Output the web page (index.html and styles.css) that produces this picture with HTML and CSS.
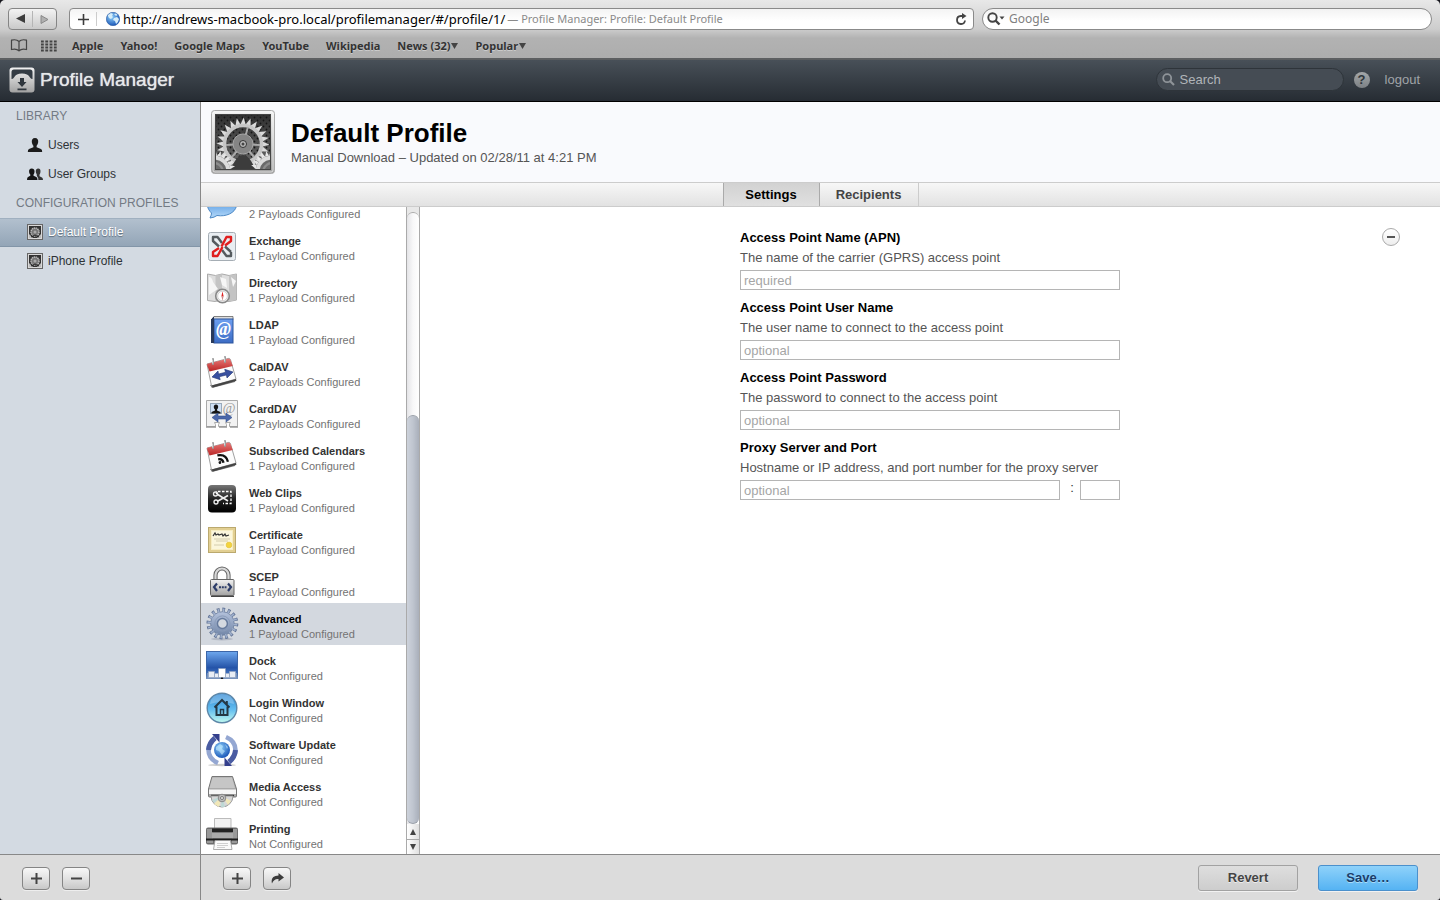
FILE: index.html
```html
<!DOCTYPE html>
<html lang="en">
<head>
<meta charset="utf-8">
<title>Profile Manager: Profile: Default Profile</title>
<link rel="stylesheet" href="styles.css">
</head>
<body>
<svg class="defs" aria-hidden="true">
  <defs>
    <linearGradient id="metal" x1="0" y1="0" x2="0" y2="1"><stop offset="0" stop-color="#f2f2f2"/><stop offset="1" stop-color="#a2a2a2"/></linearGradient>
    <linearGradient id="dark" x1="0" y1="0" x2="0" y2="1"><stop offset="0" stop-color="#303030"/><stop offset="1" stop-color="#6c6c6c"/></linearGradient>
    <linearGradient id="red" x1="0" y1="0" x2="0" y2="1"><stop offset="0" stop-color="#e87a78"/><stop offset="1" stop-color="#b92525"/></linearGradient>
    <linearGradient id="blue" x1="0" y1="0" x2="0" y2="1"><stop offset="0" stop-color="#2f67b8"/><stop offset=".55" stop-color="#6fabe8"/><stop offset="1" stop-color="#b5d9f9"/></linearGradient>
    <linearGradient id="sky" x1="0" y1="0" x2="0" y2="1"><stop offset="0" stop-color="#6ea8ee"/><stop offset=".6" stop-color="#2453a8"/><stop offset="1" stop-color="#5689d0"/></linearGradient>
    <linearGradient id="book" x1="0" y1="0" x2="0" y2="1"><stop offset="0" stop-color="#6d9ff0"/><stop offset="1" stop-color="#3c6cc4"/></linearGradient>
    <linearGradient id="aqua" x1="0" y1="0" x2="0" y2="1"><stop offset="0" stop-color="#2f86d2"/><stop offset=".55" stop-color="#62bdf0"/><stop offset="1" stop-color="#c2fbf0"/></linearGradient>
    <linearGradient id="black" x1="0" y1="0" x2="0" y2="1"><stop offset="0" stop-color="#777"/><stop offset=".5" stop-color="#222"/><stop offset="1" stop-color="#000"/></linearGradient>
    <linearGradient id="steel" x1="0" y1="0" x2="0" y2="1"><stop offset="0" stop-color="#b4c2dc"/><stop offset="1" stop-color="#7387a8"/></linearGradient>
    <radialGradient id="globe" cx=".4" cy=".35" r=".7"><stop offset="0" stop-color="#8fd0fa"/><stop offset="1" stop-color="#1450b4"/></radialGradient>
    <clipPath id="plateClip"><rect x="5" y="5" width="54" height="54"/></clipPath>
    <pattern id="mesh" width="6" height="6" patternUnits="userSpaceOnUse"><circle cx="1.5" cy="1.5" r=".9" fill="#161616"/><circle cx="4.5" cy="4.5" r=".9" fill="#161616"/></pattern>
    <path id="tooth" d="M-2.6-19.5L.7-26.500 2.600-19.500z"/>
    <g id="teeth6"><use href="#tooth"/><use href="#tooth" transform="rotate(15)"/><use href="#tooth" transform="rotate(30)"/><use href="#tooth" transform="rotate(45)"/><use href="#tooth" transform="rotate(60)"/><use href="#tooth" transform="rotate(75)"/></g>
    <g id="teeth"><use href="#teeth6"/><use href="#teeth6" transform="rotate(90)"/><use href="#teeth6" transform="rotate(180)"/><use href="#teeth6" transform="rotate(270)"/></g>
    <symbol id="gears" viewBox="0 0 64 64">
      <rect x=".5" y=".5" width="63" height="63" rx="3" fill="url(#metal)" stroke="#aaa"/>
      <rect x="2" y="2" width="60" height="60" rx="2" fill="none" stroke="#fff" stroke-opacity=".6"/>
      <rect x="4.500" y="4.500" width="55" height="55" fill="url(#dark)" stroke="#444"/>
      <rect x="5" y="5" width="54" height="54" fill="url(#mesh)"/>
      <g clip-path="url(#plateClip)">
        <g transform="translate(32 34)">
          <g fill="#dadada"><use href="#teeth"/></g>
          <circle r="18.500" fill="none" stroke="#c6c6c6" stroke-width="3.500"/>
          <path d="M0 0L5-17M0 0L17 1M0 0L-17 1M0 0L-11 13M0 0L11 13" fill="none" stroke="#a8a8a8" stroke-width="2"/>
          <circle r="10" fill="#858585" stroke="#a5a5a5"/><circle r="3.500" fill="#bbb" stroke="#333"/><circle r="1.500" fill="#444"/>
        </g>
        <path d="M20 60C23 50 28 45 32 45S41 50 44 60z" fill="#3c3c3c"/>
        <g transform="translate(4 61) scale(.78)"><g fill="#e6e6e6"><use href="#teeth"/></g><circle r="17" fill="#6a6a6a" stroke="#dcdcdc" stroke-width="5"/><path d="M-5-10A12 12 0 0 1 10 0" fill="none" stroke="#8c8c8c" stroke-width="3"/></g>
        <g transform="translate(60 61) scale(.78)"><g fill="#e6e6e6"><use href="#teeth"/></g><circle r="17" fill="#6a6a6a" stroke="#dcdcdc" stroke-width="5"/><path d="M-10 0A12 12 0 0 1 5-10" fill="none" stroke="#8c8c8c" stroke-width="3"/></g>
      </g>
    </symbol>
    <symbol id="gears-small" viewBox="0 0 16 16">
      <rect x=".5" y=".5" width="15" height="15" fill="#d8d8d8" stroke="#666"/>
      <rect x="2" y="2" width="12" height="12" fill="#333"/>
      <circle cx="8" cy="8" r="4" fill="#777" stroke="#bbb" stroke-width="1.500" stroke-dasharray="1.3 .6"/>
      <circle cx="8" cy="8" r="1.500" fill="#aaa"/>
      <path d="M2 10l4 4H2zM14 10l-4 4h4z" fill="#bbb"/><path d="M4 13l4-2 4 2" stroke="#222" fill="none"/>
    </symbol>
    <symbol id="calendar" viewBox="0 0 36 36">
      <g transform="translate(0 1)">
      <path d="M6 30l2 3 23-6 1-3z" fill="#777"/>
      <path d="M3 9l21-5.500c1.500-.3 2 0 2.500 1.200L32 24 7.500 31z" fill="#fcfcfc" stroke="#888" stroke-width=".8"/>
      <path d="M3.500 8.800L24.500 3.500q1.500 0 2 1.500l2.300 6L5.500 16.500 3 10z" fill="url(#red)"/>
      <path d="M7.500 30.500L32 24l.4 1.700L9 32.500z" fill="#444"/>
      <path d="M9 4v5M21 2v5" stroke="#999" stroke-width="2" stroke-linecap="round"/><path d="M8.600 4.500v4M20.600 2.500v4" stroke="#eee" stroke-width=".8"/>
      </g>
    </symbol>
  </defs>
</svg>

<div class="window">
  <header class="browser">
    <div class="toolbar">
      <div class="history">
        <button aria-label="Back"><svg width="10" height="10"><path d="M9 0v9L0 4.500z" fill="#3d3d3d"/></svg></button>
        <button aria-label="Forward"><svg width="9" height="9"><path d="M1 .5v8l7-4z" fill="#b0b0b0" stroke="#888"/></svg></button>
      </div>
      <div class="address">
        <button class="add" aria-label="Add bookmark"><svg width="11" height="11"><path d="M5.500 0v11M0 5.500h11" stroke="#3c3c3c" stroke-width="1.600"/></svg></button>
        <svg class="favicon" width="14" height="14" viewBox="0 0 14 14"><circle cx="7" cy="7" r="6.700" fill="url(#globe)" stroke="#2b5b9f" stroke-width=".6"/><path d="M2 3l3-2 2 1-1 2 1 1-2 2-2-1-1-2zM8 6l3-1 2 2-1 3-2 2-1-3-2-1zM8 2l2-.5 1.500 1.500L10 4z" fill="#d5ecf8"/></svg>
        <span class="url">http://andrews-macbook-pro.local/profilemanager/#/profile/1/</span>
        <span class="page-title">— Profile Manager: Profile: Default Profile</span>
        <button class="reload" aria-label="Reload"><svg width="12" height="13" viewBox="0 0 12 13"><path d="M8.500 3H5.800A4 4 0 1 0 10 7.500" fill="none" stroke="#444" stroke-width="1.800"/><path d="M7 0l4.500 3L7 6z" fill="#444"/></svg></button>
      </div>
      <label class="google">
        <svg width="18" height="14" viewBox="0 0 18 14"><circle cx="5.500" cy="5.500" r="4.200" fill="none" stroke="#444" stroke-width="1.900"/><path d="M8.500 8.500l4 4" stroke="#444" stroke-width="2.400"/><path d="M12.500 4.500h5L15 7.500z" fill="#444"/></svg>
        <input type="search" placeholder="Google" aria-label="Google">
      </label>
    </div>
    <nav class="bookmarks">
      <button aria-label="Bookmarks"><svg width="18" height="13" viewBox="0 0 18 13"><path d="M9 2.500C7 .5 4 .5 1.500 1.200v9.300C4 9.800 7 9.800 9 11.800c2-2 5-2 7.500-1.300V1.200C14 .5 11 .5 9 2.500zV12" fill="none" stroke="#444" stroke-width="1.200"/></svg></button>
      <button aria-label="Top Sites"><svg class="grid" width="16" height="12" viewBox="0 0 16 12"><path d="M0 1.500h16M0 4.500h16M0 7.500h16M0 10.500h16" stroke="#444" stroke-width="2" stroke-dasharray="2.800 1.500"/></svg></button>
      <a href="#">Apple</a><a href="#">Yahoo!</a><a href="#">Google Maps</a><a href="#">YouTube</a><a href="#">Wikipedia</a>
      <a href="#" class="drop">News (32)<svg width="7" height="6"><path d="M0 0h7L3.500 6z" fill="#444"/></svg></a>
      <a href="#" class="drop">Popular<svg width="7" height="6"><path d="M0 0h7L3.500 6z" fill="#444"/></svg></a>
    </nav>
  </header>

  <header class="app-bar">
    <svg width="26" height="26" viewBox="0 0 26 26"><rect x=".5" y=".5" width="25" height="25" rx="3" fill="url(#metal)"/><path d="M2.500 12V5q0-2.500 2.500-2.500h16q2.500 0 2.500 2.500v7q-1.500 0-2.500-1.500-2-4-8-4t-8 4Q4 12 2.500 12z" fill="#343c44"/><path d="M11 11h4v4h2.500L13 20l-4.500-5H11zM8.500 21.500h9v1.800h-9z" fill="#30373e"/></svg>
    <h1>Profile Manager</h1>
    <label class="app-search">
      <svg width="13" height="13" viewBox="0 0 13 13"><circle cx="5.200" cy="5.200" r="4" fill="none" stroke="#8f9499" stroke-width="1.800"/><path d="M8 8l4 4" stroke="#8f9499" stroke-width="2.200"/></svg>
      <input type="search" placeholder="Search" aria-label="Search">
    </label>
    <button class="help" aria-label="Help">?</button>
    <a class="logout" href="#">logout</a>
  </header>

  <main class="app">
    <aside class="sidebar">
      <h2>LIBRARY</h2>
      <a href="#"><svg width="16" height="16" viewBox="0 0 16 16"><path d="M8 1C5.500 1 4.600 2.800 4.800 5c.2 2 1 3 1.600 3.800v1.400L2 12q-1.200.7-1.200 3h14.400q0-2.300-1.200-3L9.600 10.200V8.800C10.200 8 11 7 11.200 5 11.400 2.800 10.500 1 8 1z" fill="#1c1c1c"/></svg>Users</a>
      <a href="#"><svg width="16" height="16" viewBox="0 0 16 16"><path d="M11.300 2.500c-2 0-2.700 1.500-2.500 3.300.1 1.300.6 2 1 2.600v1.400l1.500 2.700V14H16q0-2-1-2.600l-2.500-1.200V8.800c1.200-1.400 1.900-6.300-1.200-6.300z" fill="#333"/><path d="M4.800 2.500c-2.200 0-2.900 1.500-2.700 3.300.1 1.300.6 2.200 1.200 2.800v1.200L1 11Q0 11.600 0 14h10.500q0-2.400-1.200-3L6.500 9.800V8.600c1.400-1.400 1.900-6.100-1.700-6.100z" fill="#151515"/></svg>User Groups</a>
      <h2>CONFIGURATION PROFILES</h2>
      <a href="#" class="selected"><svg width="16" height="16"><use href="#gears-small"/></svg>Default Profile</a>
      <a href="#"><svg width="16" height="16"><use href="#gears-small"/></svg>iPhone Profile</a>
    </aside>

    <section class="profile">
      <header class="profile-head">
        <svg width="64" height="64"><use href="#gears"/></svg>
        <div><h2>Default Profile</h2><p>Manual Download – Updated on 02/28/11 at 4:21 PM</p></div>
      </header>
      <nav class="tabs"><button class="active">Settings</button><button>Recipients</button></nav>
      <div class="body">
        <div class="payloads">
          <ul>
            <li><svg viewBox="0 0 36 36"><path d="M18 4C8 4 2 12 3.500 20c.5 3 2 5 4 7Q7.500 29 6 32q4.500-.5 7-2.500C22 31 31 27 32.500 20 34 12 28 4 18 4z" fill="url(#blue)" stroke="#4d88c4"/></svg><div class="label"><span></span><small>2 Payloads Configured</small></div></li>
            <li><svg viewBox="0 0 36 36"><rect x="4.500" y="4.500" width="27" height="28" rx="2" fill="#e9eef2" stroke="#a5adb4"/><g fill="none" stroke-width="2.400" stroke-linejoin="round"><path d="M15 18.500L9 13V9h4.500l4.500 6" stroke="#555b5f"/><path d="M27 24v4h-4.500L18 22M21 18.500l6 5.500" stroke="#555b5f"/><path d="M17.500 18.500L22.500 9H27v4l-6 4.500" stroke="#e01f1f"/><path d="M15 20l-6 4v4h4.500l5-9" stroke="#e01f1f"/></g></svg><div class="label"><span>Exchange</span><small>1 Payload Configured</small></div></li>
            <li><svg viewBox="0 0 36 36"><path d="M3.500 4l8 1.500L18 4l7 1.500L32.500 4v26L25 31.500 18 30l-7 1.500-7.500-1z" fill="#dedede" stroke="#aaa"/><path d="M11.500 5.500v26L18 30V4zM25 5.500L32.500 4v26L25 31.500z" fill="#c4c4c4"/><path d="M5 7q3 0 4 5l5 7q-5 3-9 6zM16 7l6 2 1 9-5-3zM27 7l5 4-3 6z" fill="#f6f6f6"/><circle cx="18.500" cy="26" r="6.800" fill="#eee" stroke="#888" stroke-width="1.600"/><circle cx="18.500" cy="26" r="4.800" fill="#fff" stroke="#bbb" stroke-width=".6"/><path d="M18.500 21.500l1.200 5h-2.400z" fill="#d22"/><path d="M18.500 31l-1-4.500h2z" fill="#c88"/></svg><div class="label"><span>Directory</span><small>1 Payload Configured</small></div></li>
            <li><svg viewBox="0 0 36 36"><path d="M10 4.500h19v3H8z" fill="#ddd" stroke="#666" stroke-width=".8"/><path d="M7.500 7L10 4.500v26H7.500z" fill="#1c2c4c"/><rect x="10" y="7" width="19" height="24" fill="url(#book)" stroke="#2d559c"/><path d="M7 7h3v24H7z" fill="#283a5c"/><text x="19.500" y="23" text-anchor="middle" class="at">@</text></svg><div class="label"><span>LDAP</span><small>1 Payload Configured</small></div></li>
            <li><svg viewBox="0 0 36 36"><use href="#calendar"/><path d="M8 23l6-6 .5 3 7-1.700-.8-3L29 18l-6 6-.6-3-7 1.700.8 3z" fill="#3850a0" stroke="#223577" stroke-width=".6"/></svg><div class="label"><span>CalDAV</span><small>2 Payloads Configured</small></div></li>
            <li><svg viewBox="0 0 36 36"><path d="M2.500 4.500h31v26h-8q-.5-3 1-4h-5q1.500 2 1 4h-8q-.5-2 1-4h-5q1.500 2 1 4h-9z" fill="#f2f2f2" stroke="#aaa"/><path d="M2 31h10M15 31h8M26 31h8" stroke="#999" stroke-width="1.500"/><rect x="6.500" y="7.500" width="11" height="10" fill="#cfe0f5" stroke="#9ab"/><path d="M12 8.500c-3 0-2.500 4-1 5v1L7.500 16v1.500h9V16L13 14.500v-1c1.500-1 2-5-1-5z" fill="#151515"/><text x="25" y="17" text-anchor="middle" class="at grey">@</text><path d="M8 21.500l6-4.500v3h8v-3l6 4.500-6 4.500v-3h-8v3z" fill="#4a67aa" stroke="#34508f" stroke-width=".6"/></svg><div class="label"><span>CardDAV</span><small>2 Payloads Configured</small></div></li>
            <li><svg viewBox="0 0 36 36"><use href="#calendar"/><g transform="rotate(-12 18 20)" fill="none" stroke="#111" stroke-width="2.300"><path d="M14 20.500q4.500 0 4.500 4.500M14 16.500q9 0 9 8.500"/><circle cx="15" cy="24" r=".9" fill="#111" stroke-width="1"/></g></svg><div class="label"><span>Subscribed Calendars</span><small>1 Payload Configured</small></div></li>
            <li><svg viewBox="0 0 36 36"><rect x="4" y="5" width="28" height="27.500" rx="4" fill="url(#black)"/><path d="M12.500 14V11.500H27V23.500H19" fill="none" stroke="#fff" stroke-width="1.300" stroke-dasharray="2.500 1.500"/><path d="M13 14l11 7M13 21.500l11-6" stroke="#eee" stroke-width="1.700"/><circle cx="11.500" cy="14" r="2" fill="none" stroke="#eee" stroke-width="1.300"/><circle cx="12" cy="22" r="2" fill="none" stroke="#eee" stroke-width="1.300"/></svg><div class="label"><span>Web Clips</span><small>1 Payload Configured</small></div></li>
            <li><svg viewBox="0 0 36 36"><rect x="4.500" y="5.500" width="27" height="25" fill="#e2cf92" stroke="#bba96e"/><rect x="7.500" y="8.500" width="21" height="19" fill="#fbf6dc" stroke="#f7edc2"/><path d="M9 14l2-3 1 2 2-1 1 1 3-1 1 2 2-2 1 2 3-1" fill="none" stroke="#333" stroke-width="1.200"/><path d="M10 17h16M12 19h12M10 23h10" stroke="#ccc4a2" stroke-width=".8"/><circle cx="25" cy="23" r="2.800" fill="#f4d43c" stroke="#e9cb4c"/></svg><div class="label"><span>Certificate</span><small>1 Payload Configured</small></div></li>
            <li><svg viewBox="0 0 36 36"><path d="M11.500 17v-6a6.500 6.500 0 0 1 13 0v6" fill="none" stroke="#666" stroke-width="4.200"/><path d="M11.500 17v-6a6.500 6.500 0 0 1 13 0v6" fill="none" stroke="#d8d8d8" stroke-width="2.200"/><rect x="6.500" y="15.500" width="23.500" height="16" rx="1" fill="url(#metal)" stroke="#666"/><path d="M7 32.500h23" stroke="#444"/><path d="M13 19.500L10 23l3 4M24 19.500l3 3.500-3 4" fill="none" stroke="#2c3c68" stroke-width="2.200"/><path d="M15 23.200h7.500" stroke="#2c3c68" stroke-width="2" stroke-dasharray="2 .8"/></svg><div class="label"><span>SCEP</span><small>1 Payload Configured</small></div></li>
            <li class="selected"><svg viewBox="0 0 36 36"><ellipse cx="18" cy="33" rx="11" ry="1.500" fill="#b4bac6"/><g transform="translate(18.400 17.500)"><circle r="13.700" fill="none" stroke="#5d6f92" stroke-width="4.400" pathLength="64" stroke-dasharray="2 2"/><circle r="11.800" fill="url(#steel)" stroke="#6a7c9c" stroke-width=".8"/><circle r="13" fill="none" stroke="#9fb0cd" stroke-width="4" pathLength="64" stroke-dasharray="1.200 2.800" stroke-dashoffset="-.4"/><circle r="7.600" fill="none" stroke="#8a9cba"/><circle r="5" fill="#d4d9e0" stroke="#667a9c" stroke-width="1.500"/></g></svg><div class="label"><span>Advanced</span><small>1 Payload Configured</small></div></li>
            <li><svg viewBox="0 0 36 36"><rect x="2.500" y="3.500" width="31" height="27" fill="url(#sky)" stroke="#3c66a8"/><path d="M3 25h30l1 6H2z" fill="#7792bc"/><path d="M4.500 23.500h6v6h-6zM10.500 25.500h4v4h-4zM25.500 23.500h6v6h-6zM21.500 25.500h4v4h-4z" fill="#e8edf5" stroke="#91a3c3" stroke-width=".7"/><path d="M14.500 20.500h7v9h-7z" fill="#fff" stroke="#8497b7" stroke-width=".6"/><path d="M16.500 31l1.500-2 1.500 2z" fill="#111"/></svg><div class="label"><span>Dock</span><small>Not Configured</small></div></li>
            <li><svg viewBox="0 0 36 36"><circle cx="18" cy="18" r="14.800" fill="url(#aqua)" stroke="#5e87a8" stroke-width="1.400"/><path d="M6 14q1-10 12-10t12 10q-12-4-24 0z" fill="#fff" opacity=".25"/><path d="M10.500 17.500L18 10l7.500 7.500M12.500 16.500V25h11v-8.500M22.800 14v-3" fill="none" stroke="#243845" stroke-width="2"/><path d="M16.500 25v-5.500h3V25" fill="none" stroke="#243845" stroke-width="1.500"/></svg><div class="label"><span>Login Window</span><small>Not Configured</small></div></li>
            <li><svg viewBox="0 0 36 36"><ellipse cx="18" cy="33" rx="14" ry="1.200" fill="#ccc"/><path d="M14 31Q4.500 27 4.500 18 5 11 11 6" fill="none" stroke="#94a7d2" stroke-width="4.500"/><path d="M4.500 18Q5 11 11 6" fill="none" stroke="#4a5ca2" stroke-width="5"/><path d="M8 2h7.500v8.500z" fill="#343f8c"/><path d="M22 5q9.500 4 9.500 13-.5 7-6.500 12" fill="none" stroke="#94a7d2" stroke-width="4.500"/><path d="M31.500 18q-.5 7-6.500 12" fill="none" stroke="#4a5ca2" stroke-width="5"/><path d="M28 34h-7.500v-8.500z" fill="#343f8c"/><circle cx="18" cy="18" r="8" fill="url(#globe)"/><path d="M12 15l4-3 3 2-1 3 3 2-3 4-3-4-3-1zM21 12l3 3-1 2z" fill="#c8ecff" opacity=".6"/></svg><div class="label"><span>Software Update</span><small>Not Configured</small></div></li>
            <li><svg viewBox="0 0 36 36"><path d="M8 2.500h20.500L32.500 15v7q0 1-1 1h-26q-1 0-1-1v-7z" fill="#aaa" stroke="#777"/><path d="M8.500 3.500h19.500L31 14H5.500z" fill="#c6c6c6"/><path d="M5 15.500h27V20H5z" fill="#f6f6f6"/><path d="M7 21.500h23" stroke="#333" stroke-width="1.500"/><path d="M7 22a11 11 0 0 0 22 0z" fill="#d7d7d7" stroke="#999"/><path d="M18 22L10 30l5 3zM18 22l9 5-3 4z" fill="#f1e8b8"/><path d="M18 22L8 26l2 3zM18 22l3 11-4 0z" fill="#bdd8d5"/><circle cx="18" cy="24" r="3.800" fill="#bbb" stroke="#888"/><circle cx="18" cy="24" r="1.500" fill="#eee" stroke="#777"/></svg><div class="label"><span>Media Access</span><small>Not Configured</small></div></li>
            <li><svg viewBox="0 0 36 36"><path d="M10.500 2.500h16.500v12H10.500z" fill="#f2f2f2" stroke="#bbb"/><rect x="2" y="11.500" width="32" height="17" rx="2" fill="#6d6d6d"/><path d="M3 13h6v14H3zM28 13h5v14h-5z" fill="#999"/><path d="M8 12.500h21v4H8z" fill="#222"/><path d="M8 16.500h21v6H8z" fill="#aaa"/><path d="M2 22.500h32v2H2z" fill="#1c1c1c"/><path d="M11 24.500h15.500l1.500 9H9.500z" fill="#fafafa" stroke="#999" stroke-width=".8"/><path d="M13 27.500h11M13 29.500h11M13 31.500h8" stroke="#bbb" stroke-width=".7"/></svg><div class="label"><span>Printing</span><small>Not Configured</small></div></li>
          </ul>
          <div class="scrollbar">
            <div class="track"><div class="thumb"></div></div>
            <button aria-label="Scroll up"><svg width="6" height="6"><path d="M3 0l3 6H0z" fill="#444"/></svg></button>
            <button aria-label="Scroll down"><svg width="6" height="6"><path d="M0 0h6L3 6z" fill="#444"/></svg></button>
          </div>
        </div>
        <div class="pane">
          <form class="fields">
            <div class="field"><label for="apn">Access Point Name (APN)</label><p>The name of the carrier (GPRS) access point</p><input id="apn" placeholder="required"></div>
            <div class="field"><label for="user">Access Point User Name</label><p>The user name to connect to the access point</p><input id="user" placeholder="optional"></div>
            <div class="field"><label for="pass">Access Point Password</label><p>The password to connect to the access point</p><input id="pass" type="password" placeholder="optional"></div>
            <div class="field"><label for="proxy">Proxy Server and Port</label><p>Hostname or IP address, and port number for the proxy server</p><div class="proxy"><input id="proxy" placeholder="optional"><span>:</span><input class="port" aria-label="Port"></div></div>
          </form>
          <button class="remove" aria-label="Remove payload"></button>
        </div>
      </div>
    </section>
  </main>

  <footer class="bottom">
    <div class="side-actions">
      <button class="tool" aria-label="Add profile"><svg width="11" height="11"><path d="M5.500 0v11M0 5.500h11" stroke="#444" stroke-width="2"/></svg></button>
      <button class="tool" aria-label="Remove profile"><svg width="11" height="11"><path d="M0 5.500h11" stroke="#444" stroke-width="2"/></svg></button>
    </div>
    <div class="main-actions">
      <div class="tools">
        <button class="tool" aria-label="Add payload"><svg width="11" height="11"><path d="M5.500 0v11M0 5.500h11" stroke="#444" stroke-width="2"/></svg></button>
        <button class="tool" aria-label="Share"><svg width="13" height="11" viewBox="0 0 13 11"><path d="M7.500 0L13 4.500l-5.500 4V6Q3 5.500 1 10.500-1 3 7.500 2.500z" fill="#3c3c3c"/></svg></button>
      </div>
      <button class="push">Revert</button>
      <button class="push save">Save…</button>
    </div>
  </footer>
</div>
</body>
</html>
```
FILE: styles.css
```css
* { box-sizing: border-box; }
body { margin: 0; background: #15151c; font: 13px/20px "Liberation Sans", Arial, sans-serif; color: #333; }
h1, h2, p, ul { margin: 0; padding: 0; font-weight: normal; }
button, input { font: inherit; color: inherit; margin: 0; padding: 0; border: 0; background: none; outline: 0; min-width: 0; }
input[type="search"] { appearance: none; }
button { display: flex; align-items: center; justify-content: center; }
a { color: inherit; text-decoration: none; }
svg { display: block; flex: none; }
.defs { position: absolute; width: 0; height: 0; }

.window { display: flex; flex-direction: column; height: 100vh; border-radius: 5px 5px 3px 3px; overflow: hidden; }

/* Browser chrome */
.browser { flex: none; padding: 8px 8px 0; height: 60px; background: linear-gradient(#e8e8e8, #cdcdcd 50%, #b2b2b2 66%, #adadad); border-bottom: 2px solid #5d5f61; font-family: "Noto Sans", sans-serif; }
.toolbar { display: flex; height: 22px; }
.history { flex: none; display: flex; width: 49px; margin-right: 12px; border: 1px solid #858585; border-radius: 4px; background: linear-gradient(#f3f3f3, #c9c9c9); }
.history button { flex: 1; }
.history button + button { border-left: 1px solid #b5b5b5; margin: 2px 0; }
.address { flex: 1; display: flex; align-items: center; margin-right: 8px; padding: 0 6px 0 0; border: 1px solid #8a8a8a; border-radius: 4px; background: linear-gradient(#f4f4f4, #fff 60%); min-width: 0; white-space: nowrap; }
.add { width: 27px; height: 14px; border-right: 1px solid #ccc; margin-right: 9px; }
.url { margin-left: 3px; font-size: 13px; color: #000; }
.page-title { margin-left: 2px; font-size: 11px; color: #8a8a8a; }
.reload { margin-left: auto; }
.google { flex: 0 1 450px; display: flex; align-items: center; gap: 4px; padding: 0 4px; border: 1px solid #8a8a8a; border-radius: 11px; background: linear-gradient(#f2f2f2, #fff 60%); min-width: 0; }
.google input { flex: 1; font-size: 12px; }
.google input::placeholder { color: #808080; }
.bookmarks { display: flex; align-items: center; gap: 17px; height: 28px; padding: 3px 2px 0; font-size: 11px; font-weight: bold; color: #333; text-shadow: 0 1px 0 #ccc; }
.bookmarks button + button { margin: 0 -2px 0 -4px; }
.drop { display: flex; align-items: center; gap: 1px; }

/* Application bar */
.app-bar { flex: none; display: flex; align-items: center; height: 42px; padding: 0 20px 2px 9px; background: linear-gradient(#485058, #262c33); border-bottom: 1px solid #000; }
.app-bar h1 { margin: 0 auto 0 5px; font-size: 19px; color: #e6e8ea; text-shadow: 0 0 1px #e6e8ea; }
.app-search { display: flex; align-items: center; gap: 5px; width: 188px; height: 23px; padding: 0 5px; border: 1px solid #2e343a; border-radius: 12px; background: #454c54; }
.app-search input { flex: 1; }
.app-search input::placeholder { color: #b1b5b9; }
.help { width: 16px; height: 16px; margin: 0 15px 0 10px; border-radius: 50%; background: linear-gradient(#a4a7a9, #7c8084); color: #2f353b; font-weight: bold; }
.logout { color: #a0a4a8; }

/* Main area */
.app { flex: 1; display: flex; min-height: 0; }
.sidebar { flex: none; width: 201px; background: #d3dae2; border-right: 1px solid #888; }
.sidebar h2, .sidebar a { display: flex; align-items: center; height: 29px; padding-bottom: 2px; font-size: 12px; white-space: nowrap; }
.sidebar h2 { padding-left: 16px; color: #737b84; }
.sidebar a { gap: 5px; padding-left: 27px; color: #2e3236; }
.sidebar a.selected { color: #fff; background: linear-gradient(#b2c0ce, #93a5b7); border-top: 1px solid #a0b0c0; border-bottom: 1px solid #8295a8; text-shadow: 0 1px 1px #5a6a7a; }
.profile { flex: 1; display: flex; flex-direction: column; min-width: 0; }
.profile-head { flex: none; display: flex; align-items: center; gap: 16px; height: 80px; padding-left: 10px; background: #f9fafd; }
.profile-head h2 { font-size: 26px; line-height: 32px; font-weight: bold; color: #000; }
.profile-head p { line-height: 18px; color: #555; }
.tabs { flex: none; display: flex; justify-content: center; height: 25px; border: solid #ccc; border-width: 1px 0; background: linear-gradient(#f7f7f7, #e2e2e2); padding-bottom: 0; }
.tabs button { width: 99px; font-weight: bold; color: #444; border-right: 1px solid #ccc; }
.tabs .active { width: 97px; color: #000; background: linear-gradient(#d2d2d2, #e0e0e0); border: solid #aaa; border-width: 0 1px; }
.body { flex: 1; display: flex; min-height: 0; background: #fff; }

/* Payload list */
.payloads { flex: none; display: flex; width: 219px; }
.payloads ul { flex: 1; display: flex; flex-direction: column; justify-content: flex-end; overflow: hidden; list-style: none; padding: 0; }
.payloads li { flex: none; display: flex; gap: 9px; height: 42px; padding: 3px 0 0 3px; }
.payloads li:last-child { margin-bottom: -1px; }
.payloads li > svg { width: 36px; height: 36px; }
.label { display: flex; flex-direction: column; justify-content: flex-end; height: 36px; }
.label span, .label small { display: block; font-size: 11px; line-height: 15px; color: #737373; }
.label span { font-weight: bold; color: #333; }
.payloads .selected { background: #d3d8df; }
.payloads .selected span { color: #000; }
.at { font: italic bold 18px "Liberation Serif", serif; fill: #fff; }
.at.grey { font-size: 14px; font-weight: normal; fill: #999; }
.scrollbar { flex: none; display: flex; flex-direction: column; width: 14px; border: solid #aaa; border-width: 0 1px; background: #e8e8e8; }
.track { flex: 1; display: flex; flex-direction: column; justify-content: flex-end; margin-top: 5px; border-top: 1px solid #aaa; border-radius: 7px 7px 0 0; background: linear-gradient(90deg, #e4e4e7, #f8f8f9 50%, #fff); }
.thumb { height: 67%; border: 1px solid #999fa8; border-width: 1px 0; border-radius: 7px; background: linear-gradient(90deg, #cdd2db, #bfc5cf 50%, #a9afba); }
.scrollbar button { height: 15px; border-top: 1px solid #aaa; background: linear-gradient(90deg, #fff, #e0e0e0); }
.scrollbar .track + button { border-top: 0; }

/* Payload settings */
.pane { flex: 1; display: grid; grid-template-columns: 1fr 380px 1fr; align-items: start; padding-top: 21px; }
.fields { grid-column: 2; display: flex; flex-direction: column; gap: 8px; }
.field label { display: block; font-weight: bold; color: #000; }
.field p { margin-bottom: 2px; color: #555; white-space: nowrap; }
.field input { display: block; width: 100%; height: 20px; padding: 1px 3px 0; border: 1px solid #b5b5b5; background: #fff; }
.field input::placeholder { color: #a5a5a5; }
.proxy { display: flex; }
.proxy span { width: 20px; flex: none; text-align: center; line-height: 16px; padding-left: 4px; }
.field .port { width: 40px; flex: none; }
.remove { grid-column: 3; justify-self: end; width: 18px; height: 18px; margin-right: 40px; border: 1px solid #aaa; border-radius: 50%; background: linear-gradient(#fff, #eee); }
.remove::before { content: ""; width: 8px; height: 2px; background: #555; }

/* Bottom bar */
.bottom { flex: none; display: flex; height: 46px; border-top: 1px solid #888; background: #dcdcdc; }
.side-actions { display: flex; align-items: center; gap: 12px; width: 201px; padding: 2px 0 0 22px; border-right: 1px solid #888; }
.main-actions { flex: 1; display: flex; align-items: center; padding: 0 22px; }
.tools { display: flex; gap: 12px; padding-top: 2px; }
.tool { width: 28px; height: 23px; border: 1px solid #858585; border-radius: 4px; background: linear-gradient(#f8f8f8, #e2e2e2 50%, #c8c8c8); box-shadow: 0 1px 0 #eee; }
.push { width: 100px; height: 26px; margin-left: auto; border: 1px solid #a2a2a2; border-radius: 3px; background: linear-gradient(#dedede, #cdcdcd); box-shadow: 0 1px 0 #f2f2f2; font-weight: bold; color: #444; text-shadow: 0 1px 0 #eee; }
.save { margin-left: 20px; border-color: #4b90cc; background: linear-gradient(#8fd2fa, #55b3f3); color: #1a3d6a; text-shadow: 0 1px 0 #a8dcfa; }
```
